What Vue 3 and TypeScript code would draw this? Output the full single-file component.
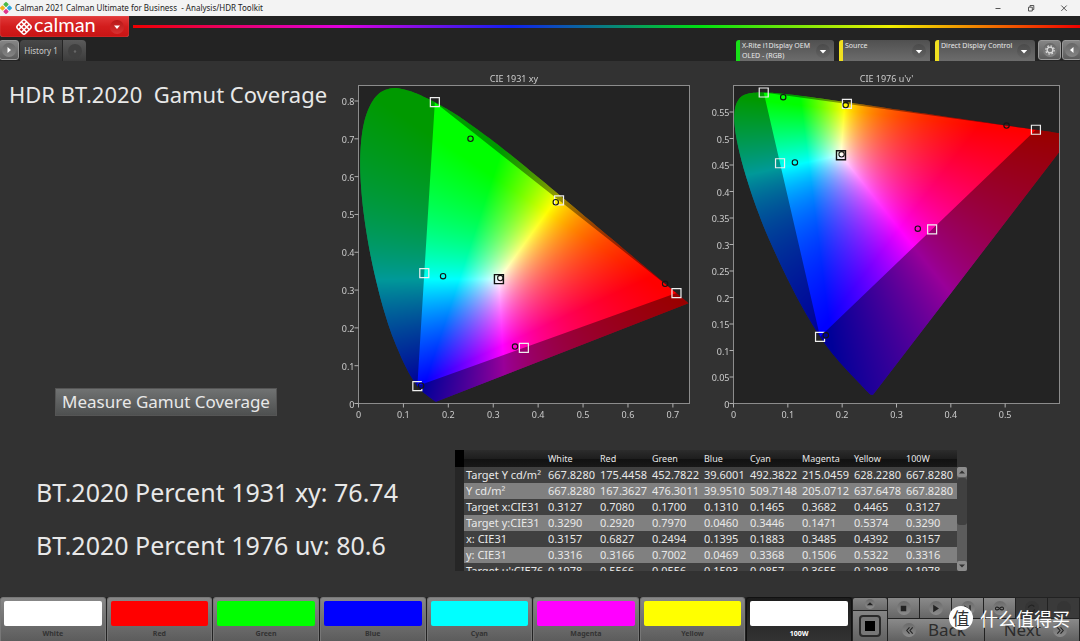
<script setup lang="ts">
import { onMounted, ref } from 'vue'

type Pt = [number, number]

interface Chart {
  id: string
  title: string
  right: number
  maxX: number
  maxY: number
  xTicks: number[]
  yTicks: number[]
  uv: boolean
}

const VIEW_W = 375
const VIEW_H = 360
const LEFT = 28.5
const TOP = 20.5
const BOTTOM = 338.5

const range = (n: number, step: number): number[] =>
  Array.from({ length: n }, (_, i) => Math.round(i * step * 100) / 100)

const charts: Chart[] = [
  { id: 'xy', title: 'CIE 1931 xy', right: 359.5, maxX: 0.737, maxY: 0.841, xTicks: range(8, 0.1), yTicks: range(9, 0.1), uv: false },
  { id: 'uv', title: "CIE 1976 u'v'", right: 354.5, maxX: 0.6, maxY: 0.6, xTicks: range(6, 0.1), yTicks: range(12, 0.05), uv: true },
]

const locus: Pt[] = [
  [0.1741, 0.005], [0.1714, 0.0051], [0.1689, 0.0069], [0.1644, 0.0109], [0.1566, 0.0177],
  [0.144, 0.0297], [0.1355, 0.0399], [0.1241, 0.0578], [0.1096, 0.0868], [0.0913, 0.1327],
  [0.0687, 0.2007], [0.0454, 0.295], [0.0235, 0.4127], [0.0082, 0.5384], [0.0039, 0.6548],
  [0.0139, 0.7502], [0.0389, 0.812], [0.0743, 0.8338], [0.1142, 0.8262], [0.1547, 0.8059],
  [0.1929, 0.7816], [0.2296, 0.7543], [0.3016, 0.6923], [0.3731, 0.6245], [0.4441, 0.5547],
  [0.5125, 0.4866], [0.5752, 0.4242], [0.627, 0.3725], [0.6658, 0.334], [0.6915, 0.3083],
  [0.719, 0.2809], [0.7347, 0.2653],
]

const gamut: Pt[] = [[0.708, 0.292], [0.17, 0.797], [0.131, 0.046]]

const names = ['White', 'Red', 'Green', 'Blue', 'Cyan', 'Magenta', 'Yellow', '100W']

const rows: { label: string; values: string[] }[] = [
  { label: 'Target Y cd/m²', values: ['667.8280', '175.4458', '452.7822', '39.6001', '492.3822', '215.0459', '628.2280', '667.8280'] },
  { label: 'Y cd/m²', values: ['667.8280', '167.3627', '476.3011', '39.9510', '509.7148', '205.0712', '637.6478', '667.8280'] },
  { label: 'Target x:CIE31', values: ['0.3127', '0.7080', '0.1700', '0.1310', '0.1465', '0.3682', '0.4465', '0.3127'] },
  { label: 'Target y:CIE31', values: ['0.3290', '0.2920', '0.7970', '0.0460', '0.3446', '0.1471', '0.5374', '0.3290'] },
  { label: 'x: CIE31', values: ['0.3157', '0.6827', '0.2494', '0.1395', '0.1883', '0.3485', '0.4392', '0.3157'] },
  { label: 'y: CIE31', values: ['0.3316', '0.3166', '0.7002', '0.0469', '0.3368', '0.1506', '0.5322', '0.3316'] },
  { label: "Target u':CIE76", values: ['0.1978', '0.5566', '0.0556', '0.1593', '0.0857', '0.3655', '0.2088', '0.1978'] },
]

const swatches = [
  { name: 'White', color: 'white' },
  { name: 'Red', color: 'red' },
  { name: 'Green', color: 'green' },
  { name: 'Blue', color: 'blue' },
  { name: 'Cyan', color: 'cyan' },
  { name: 'Magenta', color: 'magenta' },
  { name: 'Yellow', color: 'yellow' },
  { name: '100W', color: 'white' },
]
const selected = ref('100W')

const devices = [
  { lines: ['X-Rite i1Display OEM', 'OLED - (RGB)'], tone: 'ok', size: 'd1' },
  { lines: ['Source'], tone: 'warn', size: 'd2' },
  { lines: ['Direct Display Control'], tone: 'warn', size: 'd3' },
]

const sx = (c: Chart, x: number): number => LEFT + (x / c.maxX) * (c.right - LEFT)
const sy = (c: Chart, y: number): number => BOTTOM - (y / c.maxY) * (BOTTOM - TOP)

function place(c: Chart, x: number, y: number): Pt {
  if (!c.uv) return [sx(c, x), sy(c, y)]
  const d = -2 * x + 12 * y + 3
  return [sx(c, (4 * x) / d), sy(c, (9 * y) / d)]
}

function markers(c: Chart, xRow: number) {
  return names.slice(0, 7).map((name, i) => {
    const p = place(c, Number(rows[xRow].values[i]), Number(rows[xRow + 1].values[i]))
    return { name, x: p[0], y: p[1] }
  })
}

const squarePath = (name: string): string =>
  name === 'Blue' ? 'M4.5 -4.5H-4.5V4.5H4.5V2' : 'M4.5 -4.5H-4.5V4.5H4.5Z'

const encode = (v: number): number => (v <= 0 ? 0 : 255 * Math.pow(v, 0.9))

function colorAt(x: number, y: number): [number, number, number] {
  const z = 1 - x - y
  const r = 3.2406 * x - 1.5372 * y - 0.4986 * z
  const g = -0.9689 * x + 1.8758 * y + 0.0415 * z
  const b = 0.0557 * x - 0.204 * y + 1.057 * z
  const m = Math.max(r, g, b, 0.0001)
  return [encode(r / m), encode(g / m), encode(b / m)]
}

function smoothLocus(): Pt[] {
  const out: Pt[] = []
  for (let i = 0; i < locus.length - 1; i++) {
    const p0 = locus[Math.max(0, i - 1)]
    const p1 = locus[i]
    const p2 = locus[i + 1]
    const p3 = locus[Math.min(locus.length - 1, i + 2)]
    for (let s = 0; s < 8; s++) {
      const t = s / 8
      const f = (k: 0 | 1): number =>
        0.5 * (2 * p1[k] + (p2[k] - p0[k]) * t + (2 * p0[k] - 5 * p1[k] + 4 * p2[k] - p3[k]) * t * t +
          (3 * p1[k] - p0[k] - 3 * p2[k] + p3[k]) * t * t * t)
      out.push([f(0), f(1)])
    }
  }
  out.push(locus[locus.length - 1])
  return out
}

function trace(path: Path2D, c: Chart, pts: Pt[]): void {
  pts.forEach((p, i) => {
    const [px, py] = place(c, p[0], p[1])
    if (i === 0) path.moveTo(px, py)
    else path.lineTo(px, py)
  })
  path.closePath()
}

function paint(canvas: HTMLCanvasElement, c: Chart): void {
  const ctx = canvas.getContext('2d')
  const field = document.createElement('canvas')
  field.width = VIEW_W
  field.height = VIEW_H
  const fctx = field.getContext('2d')
  if (!ctx || !fctx) return
  const img = fctx.createImageData(VIEW_W, VIEW_H)
  for (let py = 0; py < VIEW_H; py++) {
    for (let px = 0; px < VIEW_W; px++) {
      let x = ((px + 0.5 - LEFT) / (c.right - LEFT)) * c.maxX
      let y = ((BOTTOM - py - 0.5) / (BOTTOM - TOP)) * c.maxY
      if (c.uv) {
        const d = 6 * x - 16 * y + 12
        const u = x
        x = (9 * u) / d
        y = (4 * y) / d
      }
      const rgb = colorAt(x, y)
      const o = (py * VIEW_W + px) * 4
      img.data[o] = rgb[0]
      img.data[o + 1] = rgb[1]
      img.data[o + 2] = rgb[2]
      img.data[o + 3] = 255
    }
  }
  fctx.putImageData(img, 0, 0)

  ctx.fillStyle = '#232323'
  ctx.fillRect(LEFT, TOP, c.right - LEFT, BOTTOM - TOP)
  ctx.save()
  ctx.beginPath()
  ctx.rect(LEFT, TOP, c.right - LEFT, BOTTOM - TOP)
  ctx.clip()
  const outline = new Path2D()
  trace(outline, c, smoothLocus())
  ctx.clip(outline)
  ctx.drawImage(field, 0, 0)
  const outside = new Path2D()
  outside.rect(0, 0, VIEW_W, VIEW_H)
  trace(outside, c, gamut)
  ctx.fillStyle = 'rgba(0, 0, 0, 0.4)'
  ctx.fill(outside, 'evenodd')
  ctx.restore()
}

const canvases = ref<HTMLCanvasElement[]>([])
onMounted(() => {
  canvases.value.forEach((el) => {
    const c = charts.find((k) => k.id === el.dataset.chart)
    if (c) paint(el, c)
  })
})
</script>

<template>
  <div class="app">
    <header class="titlebar">
      <svg class="app-icon" viewBox="0 0 12 12" aria-hidden="true">
        <rect x="4" y="0.4" width="4" height="4" rx="0.8" transform="rotate(45 6 2.4)" fill="#49b848" />
        <rect x="0.5" y="4" width="4" height="4" rx="0.8" transform="rotate(45 2.5 6)" fill="#f2b21c" />
        <rect x="7.5" y="4" width="4" height="4" rx="0.8" transform="rotate(45 9.5 6)" fill="#2aa5e0" />
        <rect x="4" y="7.6" width="4" height="4" rx="0.8" transform="rotate(45 6 9.6)" fill="#e0348c" />
      </svg>
      <span class="app-title">Calman 2021 Calman Ultimate for Business&nbsp; - Analysis/HDR Toolkit</span>
      <div class="win-buttons">
        <button type="button" aria-label="Minimize"><svg viewBox="0 0 10 10"><path d="M2.5 5.5H7.5" /></svg></button>
        <button type="button" aria-label="Restore"><svg viewBox="0 0 10 10"><path d="M2.5 4.2H6.3V8H2.5ZM4 4V2.5H7.8V6.5H6.5" /></svg></button>
        <button type="button" aria-label="Close"><svg viewBox="0 0 10 10"><path d="M2.3 2.5L7.7 7.9M7.7 2.5L2.3 7.9" /></svg></button>
      </div>
    </header>

    <div class="brandbar">
      <button type="button" class="brand">
        <svg class="brand-mark" viewBox="0 0 18 18" aria-hidden="true">
          <g transform="rotate(45 9 9)" fill="none" stroke="#fff" stroke-width="1.5">
            <rect x="3.4" y="3.4" width="11.2" height="11.2" rx="2" />
            <path d="M7.1 3.4V14.6M10.9 3.4V14.6M3.4 7.1H14.6M3.4 10.9H14.6" />
          </g>
        </svg>
        <span class="brand-name">calman</span>
        <span class="knob brand-knob"><svg viewBox="0 0 8 8"><path d="M1 2.5H7L4 6Z" /></svg></span>
      </button>
      <div class="spectrum"></div>
    </div>

    <div class="toolbar">
      <button type="button" class="side-btn" aria-label="Expand panel">
        <span class="knob light"><svg viewBox="0 0 8 8"><path d="M2.5 1V7L6 4Z" /></svg></span>
      </button>
      <div class="tabs">
        <button type="button" class="tab">History 1</button>
        <button type="button" class="tab tab-add" aria-label="Add history"><span class="knob dark"><svg viewBox="0 0 8 8"><circle cx="4" cy="4.5" r="1.2" /></svg></span></button>
      </div>
      <div class="devices">
        <button v-for="d in devices" :key="d.size" type="button" class="device" :class="[d.tone, d.size]">
          <span class="device-text"><span v-for="l in d.lines" :key="l">{{ l }}</span></span>
          <span class="knob dim"><svg viewBox="0 0 8 8"><path d="M0.8 3H7.2L4 6.4Z" /></svg></span>
        </button>
      </div>
      <button type="button" class="side-btn gear" aria-label="Settings">
        <span class="knob light"><svg viewBox="0 0 12 12"><circle cx="6" cy="6" r="2.9" fill="none" stroke="#ddd" stroke-width="1.3" /><circle cx="6" cy="6" r="4.2" fill="none" stroke="#ddd" stroke-width="1.2" stroke-dasharray="1.65 1.65" /></svg></span>
      </button>
      <button type="button" class="side-btn" aria-label="Collapse panel">
        <span class="knob light"><svg viewBox="0 0 8 8"><path d="M5.5 1V7L2 4Z" /></svg></span>
      </button>
    </div>

    <main class="workspace">
      <section class="upper">
        <div class="intro">
          <h1>HDR BT.2020&nbsp; Gamut Coverage</h1>
          <button type="button" class="measure">Measure Gamut Coverage</button>
        </div>
        <figure v-for="c in charts" :key="c.id" class="chart">
          <canvas ref="canvases" :data-chart="c.id" :width="VIEW_W" :height="VIEW_H"></canvas>
          <svg :viewBox="`0 0 ${VIEW_W} ${VIEW_H}`" role="img" :aria-label="c.title">
            <text class="chart-title" :x="(LEFT + c.right) / 2 - 10" y="17" text-anchor="middle">{{ c.title }}</text>
            <rect class="frame" :x="LEFT" :y="TOP" :width="c.right - LEFT" :height="BOTTOM - TOP" />
            <g v-for="t in c.yTicks" :key="`y${t}`">
              <path class="tick" :d="`M${LEFT - 4} ${sy(c, t)}H${LEFT}`" />
              <text class="axis" :x="LEFT - 4" :y="sy(c, t) + 4" text-anchor="end">{{ t }}</text>
            </g>
            <g v-for="t in c.xTicks" :key="`x${t}`">
              <path class="tick" :d="`M${sx(c, t)} ${BOTTOM}V${BOTTOM + 4}`" />
              <text class="axis" :x="sx(c, t)" :y="BOTTOM + 14" text-anchor="middle">{{ t }}</text>
            </g>
            <path
              v-for="m in markers(c, 2)" :key="`t${m.name}`" class="target" :class="{ ink: m.name === 'White' }"
              :d="squarePath(m.name)" :transform="`translate(${m.x} ${m.y})`"
            />
            <circle v-for="m in markers(c, 4)" :key="`m${m.name}`" class="measured" :cx="m.x" :cy="m.y" r="2.7" />
          </svg>
        </figure>
      </section>

      <section class="lower">
        <div class="results">
          <p>BT.2020 Percent 1931 xy: 76.74</p>
          <p>BT.2020 Percent 1976 uv: 80.6</p>
        </div>
        <div class="grid">
          <table>
            <colgroup>
              <col class="c-mark"><col class="c-label"><col class="c-val"><col class="c-val"><col class="c-val">
              <col class="c-blue"><col class="c-val"><col class="c-val"><col class="c-val"><col class="c-last">
            </colgroup>
            <thead>
              <tr><th class="corner"></th><th></th><th v-for="n in names" :key="n" scope="col">{{ n }}</th></tr>
            </thead>
            <tbody>
              <tr v-for="r in rows" :key="r.label">
                <td class="mark"></td>
                <th scope="row">{{ r.label }}</th>
                <td v-for="(v, i) in r.values" :key="i">{{ v }}</td>
              </tr>
            </tbody>
          </table>
          <div class="scroll">
            <button type="button" aria-label="Scroll up"><svg viewBox="0 0 8 8"><path d="M1 5.5L4 2.5L7 5.5Z" /></svg></button>
            <div class="thumb"></div>
            <button type="button" aria-label="Scroll down"><svg viewBox="0 0 8 8"><path d="M1 2.5L4 5.5L7 2.5Z" /></svg></button>
          </div>
        </div>
      </section>
    </main>

    <footer class="dock">
      <div class="swatches">
        <button
          v-for="s in swatches" :key="s.name" type="button" class="swatch" :class="{ active: s.name === selected }"
          @click="selected = s.name"
        >
          <span class="chip" :class="s.color"></span>
          <span class="swatch-name">{{ s.name }}</span>
        </button>
      </div>
      <div class="pattern">
        <button type="button" class="pattern-up" aria-label="More patterns"><span class="knob mid"><svg viewBox="0 0 8 8"><path d="M1.5 5L4 2.5L6.5 5Z" /></svg></span></button>
        <button type="button" class="pattern-win" aria-label="Pattern window"><span class="window-icon"></span></button>
      </div>
      <div class="transport">
        <div class="media">
          <button type="button" aria-label="Stop"><span class="knob mid"><svg viewBox="0 0 12 12"><path d="M3 3H9V9H3Z" /></svg></span></button>
          <button type="button" aria-label="Play"><span class="knob mid"><svg viewBox="0 0 12 12"><path d="M3.5 2V10L9.8 6Z" /></svg></span></button>
          <button type="button" aria-label="Step"><span class="knob mid"><svg viewBox="0 0 12 12"><path d="M2.5 2.5V9.5L7.5 6ZM8 2.5H9.5V9.5H8Z" /></svg></span></button>
          <button type="button" aria-label="Continuous"><span class="knob mid"><svg viewBox="0 0 12 12"><path class="line" d="M6 6C4.8 4.3 1.6 3.6 1.6 6S4.8 7.7 6 6S10.4 3.6 10.4 6S7.2 7.7 6 6Z" /></svg></span></button>
          <button type="button" class="off" aria-label="Refresh"><span class="knob mid"><svg viewBox="0 0 12 12"><path class="line" d="M2.5 5A3.6 3.6 0 0 1 9 4M9.5 7A3.6 3.6 0 0 1 3 8" /></svg></span></button>
          <button type="button" class="off" aria-label="Target"><span class="knob mid"></span></button>
        </div>
        <div class="nav">
          <button type="button"><span class="knob mid"><svg viewBox="0 0 12 12"><path class="line" d="M6 2.5L3 6L6 9.5M9.5 2.5L6.5 6L9.5 9.5" /></svg></span>Back</button>
          <button type="button" class="next">Next<span class="knob mid"><svg viewBox="0 0 12 12"><path class="line" d="M2.5 2.5L5.5 6L2.5 9.5M6 2.5L9 6L6 9.5" /></svg></span></button>
        </div>
      </div>
      <div class="watermark"><span class="seal">值</span><span>什么值得买</span></div>
    </footer>
  </div>
</template>

<style>
body {
  background: #323232;
}
</style>

<style scoped>
.app {
  display: flex;
  flex-direction: column;
  min-height: 100vh;
  background: #323232;
  color: #e8e8e8;
  font-family: "Noto Sans", "Open Sans", "Noto Sans CJK SC", sans-serif;
  overflow: hidden;
}
button {
  margin: 0;
  padding: 0;
  border: 0;
  background: none;
  color: inherit;
  font: inherit;
}
svg {
  display: block;
}
.titlebar {
  display: flex;
  align-items: center;
  height: 16px;
  background: #f3f3f3;
  color: #222;
}
.app-icon {
  width: 12px;
  height: 12px;
  margin: 0 3px 0 0;
}
.app-title {
  flex: 1;
  font-size: 8px;
  line-height: 16px;
  white-space: pre;
}
.win-buttons {
  display: flex;
}
.win-buttons button {
  width: 33px;
  height: 16px;
  display: grid;
  place-items: center;
}
.win-buttons svg {
  width: 10px;
  height: 10px;
  fill: none;
  stroke: #444;
  stroke-width: 0.9;
}
.brandbar {
  display: flex;
  height: 22px;
  background: #232323;
}
.brand {
  display: flex;
  align-items: center;
  width: 129px;
  height: 21px;
  padding-left: 15px;
  border-radius: 0 0 3px 3px;
  background: linear-gradient(#e23a3a, #d31d1d 50%, #c81414);
  box-shadow: inset 0 0 1px #f0a0a0;
}
.brand-mark {
  width: 18px;
  height: 18px;
}
.brand-name {
  flex: 1;
  padding-left: 1px;
  text-align: left;
  color: #fff;
  font: 20px/17px Lato, sans-serif;
  height: 21px;
}
.knob {
  display: grid;
  place-items: center;
  width: 14px;
  height: 14px;
  flex: none;
  border-radius: 50%;
}
.knob svg {
  width: 8px;
  height: 8px;
  fill: #fff;
}
.brand-knob {
  margin-right: 5px;
  background: linear-gradient(#b81818, #d83030);
}
.spectrum {
  flex: 1;
  align-self: center;
  height: 3px;
  margin: 0 0 1px 4px;
  background: linear-gradient(90deg, #f00000, #e000e0 22%, #1020f0 40%, #00e010 60%, #f0f000 80%, #f00000);
}
.toolbar {
  display: flex;
  align-items: flex-end;
  height: 23px;
  background: #232323;
}
.side-btn {
  display: grid;
  place-items: center;
  width: 20px;
  height: 20px;
  margin-bottom: 1px;
  border: 1px solid #999;
  border-radius: 3px;
  background: linear-gradient(#858585, #5c5c5c);
  box-sizing: border-box;
}
.toolbar > .side-btn:first-child {
  margin-left: -1px;
}
.toolbar > .side-btn:last-child {
  margin-right: -2px;
}
.gear {
  width: 23px;
  margin: 0 1px 1px 3px;
}
.knob.light {
  background: linear-gradient(#666, #858585);
}
.gear .knob svg {
  width: 12px;
  height: 12px;
}
.tabs {
  display: flex;
  flex: 1;
  height: 21px;
  margin-left: 1px;
}
.tab {
  width: 42px;
  border-radius: 4px 0 0 0;
  background: linear-gradient(#484848, #323232);
  color: #ccc;
  font-size: 8px;
  line-height: 22px;
}
.tab-add {
  display: grid;
  place-items: center;
  width: 24px;
  border-left: 1px solid #252525;
  border-radius: 0 4px 0 0;
  background: linear-gradient(#5a5a5a, #3c3c3c);
}
.knob.dark {
  background: #404040;
}
.knob.dark svg {
  fill: #666;
}
.devices {
  display: flex;
  gap: 5px;
}
.device {
  display: flex;
  justify-content: space-between;
  align-items: center;
  height: 21px;
  padding: 0 4px 0 2px;
  border-left: 4px solid #f0e020;
  border-radius: 3px 3px 0 0;
  background: linear-gradient(#505050, #6c6c6c);
  box-sizing: border-box;
}
.device.ok {
  border-left-color: #18e018;
}
.d1 {
  width: 98px;
}
.d2 {
  width: 91px;
}
.d3 {
  width: 100px;
}
.device-text {
  display: flex;
  flex-direction: column;
  align-self: stretch;
  text-align: left;
  white-space: nowrap;
  font-size: 7px;
  line-height: 10px;
  padding-top: 1px;
}
.knob.dim {
  background: linear-gradient(#4a4a4a, #626262);
}
.workspace {
  flex: 1;
  padding-top: 4px;
}
.upper {
  display: grid;
  grid-template-columns: 330px 1fr 1fr;
}
.intro {
  display: flex;
  flex-direction: column;
  justify-content: space-between;
  align-items: flex-start;
  padding: 13px 0 9px 9px;
}
h1 {
  margin: 0;
  font-size: 22px;
  font-weight: 400;
  line-height: 32px;
  white-space: nowrap;
}
.measure {
  margin-left: 46px;
  width: 222px;
  height: 28px;
  border: 1px solid #555;
  background: linear-gradient(#707272, #4e5050);
  font-size: 17px;
  line-height: 26px;
  white-space: nowrap;
}
.chart {
  display: grid;
  margin: 0;
}
.chart canvas,
.chart svg {
  grid-area: 1 / 1;
  width: 100%;
  height: auto;
}
.chart-title {
  fill: #ccc;
  font-size: 9px;
}
.axis {
  fill: #ccc;
  font-size: 9px;
}
.frame {
  fill: none;
  stroke: #8c8c8c;
}
.tick {
  stroke: #b0b0b0;
}
.target {
  fill: none;
  stroke: #eee;
  stroke-width: 1.2;
}
.target.ink {
  stroke: #111;
  stroke-width: 1.4;
}
.measured {
  fill: none;
  stroke: #151515;
  stroke-width: 1.1;
}
.lower {
  display: flex;
  padding-top: 25px;
}
.results {
  display: flex;
  flex-direction: column;
  gap: 17px;
  width: 455px;
  padding: 24px 0 0 36px;
  box-sizing: border-box;
}
.results p {
  margin: 0;
  font-size: 25px;
  line-height: 36px;
  white-space: nowrap;
}
.grid {
  display: flex;
  height: 121px;
  overflow: hidden;
}
table {
  width: 502px;
  border-collapse: collapse;
  table-layout: fixed;
  font-size: 11px;
  line-height: 16px;
}
.c-mark {
  width: 9px;
}
.c-label {
  width: 84px;
}
.c-val {
  width: 52px;
}
.c-blue {
  width: 46px;
}
.c-last {
  width: 51px;
}
th,
td {
  height: 16px;
  padding: 0;
  text-align: left;
  font-weight: 400;
  white-space: nowrap;
}
thead th {
  height: 17px;
  background: linear-gradient(#2c2c2c, #1e1e1e 50%, #111 52%, #181818);
  font-size: 9px;
  line-height: 17px;
}
thead .corner {
  background: #000;
}
tbody tr {
  background: #404040;
}
tbody tr:nth-child(even) {
  background: #808080;
}
tbody th {
  padding-left: 2px;
}
tbody .mark {
  background: #262626;
}
.scroll {
  display: flex;
  flex-direction: column;
  justify-content: space-between;
  width: 10px;
  margin-top: 17px;
  border-radius: 2px;
  background: #5c5c5c;
}
.scroll button {
  width: 10px;
  height: 10px;
  border-radius: 2px;
  background: #8c8c8c;
}
.scroll svg {
  width: 8px;
  height: 8px;
  margin: 0 auto;
  fill: #333;
}
.thumb {
  height: 47px;
  margin-bottom: 36px;
  border-radius: 3px;
  background: #404040;
}
.dock {
  position: relative;
  display: flex;
  height: 44px;
  background: #222;
}
.swatches {
  display: flex;
  flex: 1;
}
.swatch {
  display: flex;
  flex: 1;
  flex-direction: column;
  align-items: stretch;
  margin-right: 1px;
  padding: 3px 3px 0;
  border: 1px solid #777;
  border-bottom: 0;
  border-radius: 3px 3px 0 0;
  background: linear-gradient(#888, #5c5c5c);
  color: #333;
}
.swatch.active {
  border-color: #111;
  background: linear-gradient(#1c1c1c, #333);
  color: #fff;
}
.chip {
  height: 25px;
  border-radius: 2px;
}
.white {
  background: #fff;
}
.red {
  background: #f00;
}
.green {
  background: #0f0;
}
.blue {
  background: #00f;
}
.cyan {
  background: #0ff;
}
.magenta {
  background: #f0f;
}
.yellow {
  background: #ff0;
}
.swatch-name {
  padding-top: 2px;
  font-size: 7px;
  font-weight: 700;
  line-height: 12px;
  text-align: center;
}
.pattern {
  display: flex;
  flex-direction: column;
  gap: 1px;
  width: 34px;
  padding-top: 1px;
}
.pattern-up {
  display: grid;
  place-items: center;
  height: 12px;
  background: linear-gradient(#858585, #6a6a6a);
  border-radius: 2px 2px 0 0;
  overflow: hidden;
}
.pattern-up .knob.mid,
.pattern-up .knob.mid svg {
  width: 10px;
  height: 10px;
}
.pattern-win {
  display: grid;
  place-items: center;
  flex: 1;
  background: linear-gradient(#858585, #626262);
}
.window-icon {
  width: 10px;
  height: 10px;
  border: 4px solid #777;
  outline: 2px solid #2a2a2a;
  border-radius: 2px;
  background: #000;
}
.transport {
  display: flex;
  flex-direction: column;
  gap: 1px;
  width: 193px;
  padding: 1px 1px 0 1px;
  box-sizing: border-box;
}
.media {
  display: flex;
  gap: 1px;
  height: 20px;
}
.media button {
  display: grid;
  place-items: center;
  flex: 1;
  background: linear-gradient(#8a8a8a, #666);
}
.media .off {
  background: #3a3a3a;
}
.knob.mid {
  background: linear-gradient(#6a6a6a, #8c8c8c);
}
.knob.mid svg {
  width: 11px;
  height: 11px;
  fill: #222;
}
.off .knob.mid {
  background: #353535;
}
.knob.mid .line {
  fill: none;
  stroke: #222;
  stroke-width: 1.2;
}
.nav {
  display: flex;
  flex: 1;
  gap: 1px;
}
.nav button {
  display: flex;
  flex: 1;
  align-items: center;
  gap: 12px;
  padding-left: 14px;
  background: linear-gradient(#8a8a8a, #606060);
  color: #2c2c2c;
  font-size: 17px;
  line-height: 20px;
}
.nav .next {
  justify-content: flex-end;
  padding: 0 12px 0 0;
}
.watermark {
  position: absolute;
  right: 10px;
  bottom: 11px;
  display: flex;
  align-items: center;
  gap: 7px;
  color: #fff;
  font: 18px/24px "Noto Sans CJK SC", sans-serif;
}
.seal {
  width: 24px;
  height: 24px;
  border-radius: 50%;
  background: #fff;
  color: #333;
  font-size: 17px;
  line-height: 24px;
  text-align: center;
}
</style>
